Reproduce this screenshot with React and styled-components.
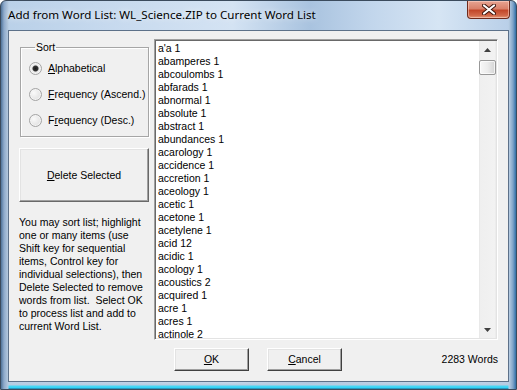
import React from "react";
import styled, { createGlobalStyle } from "styled-components";

const words = [
  "a'a 1",
  "abamperes 1",
  "abcoulombs 1",
  "abfarads 1",
  "abnormal 1",
  "absolute 1",
  "abstract 1",
  "abundances 1",
  "acarology 1",
  "accidence 1",
  "accretion 1",
  "aceology 1",
  "acetic 1",
  "acetone 1",
  "acetylene 1",
  "acid 12",
  "acidic 1",
  "acology 1",
  "acoustics 2",
  "acquired 1",
  "acre 1",
  "acres 1",
  "actinole 2",
];

const helpLines = [
  "You may sort list; highlight",
  "one or many items (use",
  "Shift key for sequential",
  "items, Control key for",
  "individual selections), then",
  "Delete Selected to remove",
  "words from list.  Select OK",
  "to process list and add to",
  "current Word List.",
];

const App = () => {
  return (
    <>
      <GlobalStyle />
      <Window>
        <TitleBar>
          <Title>Add from Word List: WL_Science.ZIP to Current Word List</Title>
          <CloseBtn>
            <svg width="14" height="11" viewBox="0 0 14 11">
              <path d="M2 1.5 L12 9.5 M12 1.5 L2 9.5" stroke="#3b1209" strokeWidth="4" strokeLinecap="round" />
              <path d="M2 1.5 L12 9.5 M12 1.5 L2 9.5" stroke="#fff" strokeWidth="2.2" strokeLinecap="round" />
            </svg>
          </CloseBtn>
        </TitleBar>
        <Client>
          <LeftCol>
            <GroupBox>
              <Legend>Sort</Legend>
              <RadioRow>
                <Radio checked />
                <span>
                  <u>A</u>lphabetical
                </span>
              </RadioRow>
              <RadioRow>
                <Radio />
                <span>
                  <u>F</u>requency (Ascend.)
                </span>
              </RadioRow>
              <RadioRow>
                <Radio />
                <span>
                  F<u>r</u>equency (Desc.)
                </span>
              </RadioRow>
            </GroupBox>
            <BigButton>
              <span>
                <u>D</u>elete Selected
              </span>
            </BigButton>
            <HelpText>
              {helpLines.map((l, i) => (
                <div key={i}>{l}</div>
              ))}
            </HelpText>
          </LeftCol>
          <RightCol>
            <ListBox>
              <Items>
                {words.map((w) => (
                  <Item key={w}>{w}</Item>
                ))}
              </Items>
              <ScrollBar>
                <Arrow>
                  <svg width="7" height="4" viewBox="0 0 7 4">
                    <path d="M3.5 0 L7 4 L0 4 Z" fill="#404040" />
                  </svg>
                </Arrow>
                <Thumb />
                <Track />
                <Arrow>
                  <svg width="7" height="4" viewBox="0 0 7 4">
                    <path d="M0 0 L7 0 L3.5 4 Z" fill="#404040" />
                  </svg>
                </Arrow>
              </ScrollBar>
            </ListBox>
            <BottomRow>
              <PushButton>
                <u>O</u>K
              </PushButton>
              <PushButton>
                <u>C</u>ancel
              </PushButton>
              <Count>2283 Words</Count>
            </BottomRow>
          </RightCol>
        </Client>
      </Window>
    </>
  );
};

const GlobalStyle = createGlobalStyle`
  body {
    margin: 0;
    overflow: hidden;
    background: #fff;
  }
`;

const Window = styled.div`
  width: 517px;
  height: 390px;
  box-sizing: border-box;
  border: 1px solid #3b4b5d;
  border-radius: 6px 6px 0 0;
  display: flex;
  flex-direction: column;
  background:
    linear-gradient(90deg, #4f7399 0, #8eaacb 3px, #b3c8de 7px, transparent 8px),
    linear-gradient(270deg, #2f6ea8 0, #7ea3c8 3px, #b8cde3 7px, transparent 8px),
    linear-gradient(0deg, #1d5f8a 0, #2fd0f4 1px, #4bd8f6 3px, #b7cbe0 4px, transparent 9px),
    linear-gradient(90deg, #b9d0e8 0%, #c9dbef 25%, #d4e3f3 45%, #a9c3df 60%, #c2d6ec 72%, #d6e5f4 85%, #b6cde7 100%);
  font-family: "Liberation Sans", Arial, sans-serif;
`;

const TitleBar = styled.div`
  height: 29px;
  display: flex;
  align-items: flex-start;
  padding-left: 7px;
  padding-right: 6px;
`;

const Title = styled.div`
  font-family: "Noto Sans", "Open Sans", sans-serif;
  font-size: 11.6px;
  color: #000;
  line-height: 16px;
  margin-top: 6px;
  text-shadow: 0 0 6px rgba(255, 255, 255, 0.9);
`;

const CloseBtn = styled.div`
  margin-left: auto;
  width: 43px;
  height: 18px;
  box-sizing: border-box;
  border: 1px solid #6e2a1c;
  border-top: none;
  border-radius: 0 0 4px 4px;
  background: linear-gradient(180deg, #e7a492 0%, #d9816a 45%, #c2472a 55%, #d2694a 85%, #e39a7a 100%);
  box-shadow: inset 0 0 0 1px rgba(255, 220, 210, 0.5);
  display: flex;
  align-items: center;
  justify-content: center;
`;

const Client = styled.div`
  flex: 1;
  margin: 0 7px 7px 7px;
  background: #f0f0f0;
  border: 1px solid #5d7189;
  display: grid;
  grid-template-columns: 130px 344px;
  column-gap: 5px;
  padding: 8px 10px 0 10px;
  font-size: 10.5px;
  color: #000;
`;

const LeftCol = styled.div`
  display: flex;
  flex-direction: column;
`;

const GroupBox = styled.fieldset`
  margin: 2px 0 0 1px;
  padding: 0 0 4px 8px;
  height: 96px;
  box-sizing: border-box;
  border: 1px solid #a6a6a6;
  box-shadow: 1px 1px 0 #fff, inset 1px 1px 0 #fff;
  display: flex;
  flex-direction: column;
`;

const Legend = styled.legend`
  padding: 0 1px;
  margin-left: 6px;
  line-height: 13px;
`;

const RadioRow = styled.label`
  display: flex;
  align-items: center;
  gap: 6px;
  height: 26px;
  line-height: 13px;
  &:first-of-type {
    margin-top: 1px;
  }
`;

const Radio = styled.span`
  width: 13px;
  height: 13px;
  box-sizing: border-box;
  border-radius: 50%;
  border: 1px solid #a4a4a4;
  background: ${(p) =>
    p.checked
      ? "radial-gradient(circle, #1a1a1a 0, #333 2.5px, #e8e8e8 3.5px, #f6f6f6 100%)"
      : "radial-gradient(circle at 35% 35%, #fafafa 0, #e3e3e3 70%, #cfcfcf 100%)"};
  box-shadow: inset 0 0 0 1px #f4f4f4;
`;

const BigButton = styled.div`
  margin-top: 11px;
  height: 54px;
  box-sizing: border-box;
  border: 1px solid;
  border-color: #fff #696969 #696969 #fff;
  box-shadow: inset -1px -1px 0 #a0a0a0, inset 1px 1px 0 #e3e3e3;
  display: flex;
  align-items: center;
  justify-content: center;
  line-height: 13px;
`;

const HelpText = styled.div`
  margin-top: 14px;
  line-height: 13px;
  white-space: pre;
`;

const RightCol = styled.div`
  display: flex;
  flex-direction: column;
`;

const ListBox = styled.div`
  height: 301px;
  box-sizing: border-box;
  border: 1px solid;
  border-color: #a0a0a0 #fff #fff #a0a0a0;
  box-shadow: inset 1px 1px 0 #696969, inset -1px -1px 0 #e3e3e3;
  background: #fff;
  display: flex;
  padding: 1px;
  overflow: hidden;
`;

const Items = styled.div`
  flex: 1;
  padding: 1px 0 0 2px;
  overflow: hidden;
`;

const Item = styled.div`
  height: 13px;
  line-height: 13px;
  white-space: nowrap;
`;

const ScrollBar = styled.div`
  width: 17px;
  display: flex;
  flex-direction: column;
  background: linear-gradient(90deg, #e3e3e3 0, #efefef 1px, #f2f2f2 16px, #e6e6e6 17px);
`;

const Arrow = styled.div`
  height: 17px;
  display: flex;
  align-items: center;
  justify-content: center;
`;

const Thumb = styled.div`
  margin: 2px 0 0 0;
  height: 15px;
  box-sizing: border-box;
  border: 1px solid #989898;
  border-radius: 2px;
  background: linear-gradient(90deg, #f7f7f7 0%, #ececec 50%, #d4d4d4 100%);
  box-shadow: inset 0 0 0 1px rgba(255, 255, 255, 0.7);
`;

const Track = styled.div`
  flex: 1;
`;

const BottomRow = styled.div`
  display: flex;
  align-items: center;
  margin-top: 8px;
  padding-left: 20px;
  gap: 18px;
`;

const PushButton = styled.div`
  width: 75px;
  height: 23px;
  box-sizing: border-box;
  border: 1px solid;
  border-color: #fff #404040 #404040 #fff;
  box-shadow: inset -1px -1px 0 #a0a0a0, inset 1px 1px 0 #e3e3e3;
  display: flex;
  align-items: center;
  justify-content: center;
  line-height: 13px;
`;

const Count = styled.div`
  margin-left: auto;
  line-height: 13px;
`;

export default App;
